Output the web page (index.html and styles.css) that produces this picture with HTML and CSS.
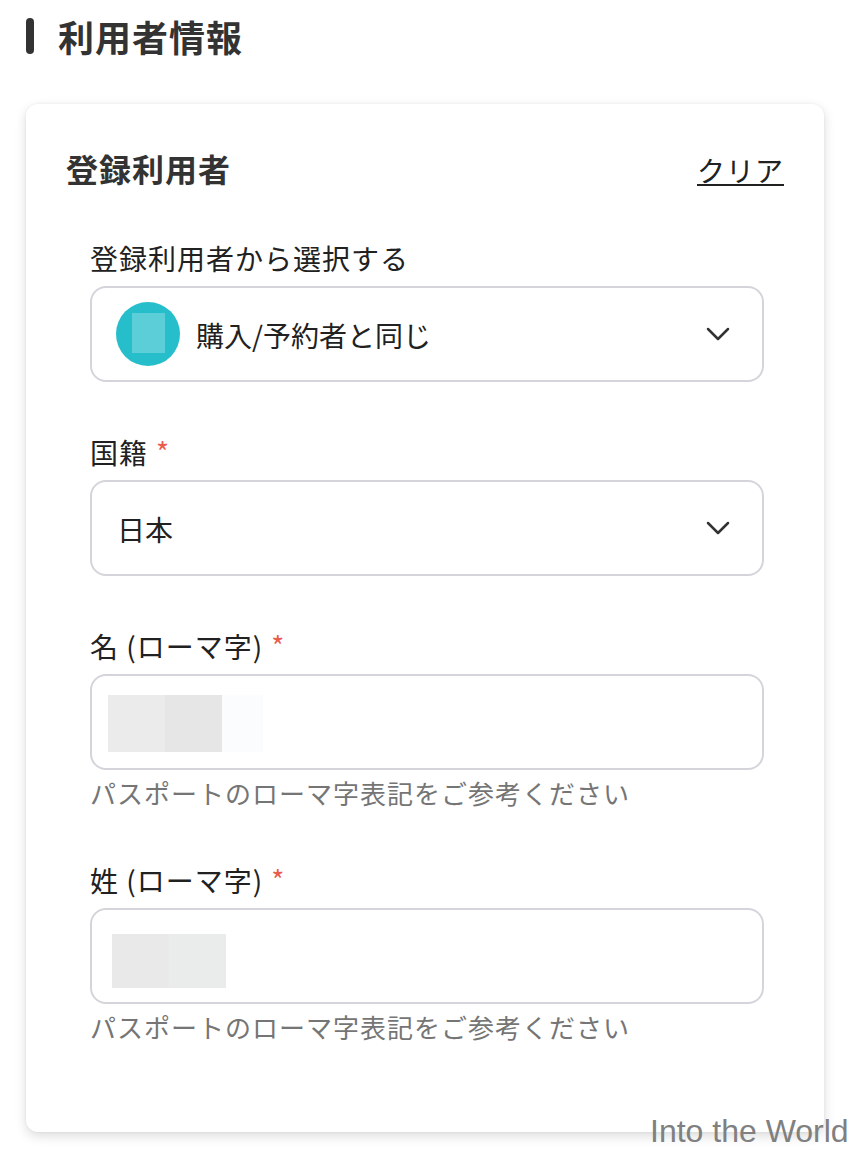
FILE: index.html
```html
<!DOCTYPE html>
<html lang="ja">
<head>
<meta charset="utf-8">
<title>利用者情報</title>
<link rel="stylesheet" href="styles.css">
</head>
<body>
<main class="page">
  <h1 class="page-title"><span class="bar"></span>利用者情報</h1>
  <section class="card">
    <header class="card-head">
      <h2 class="card-title">登録利用者</h2>
      <a class="clear">クリア</a>
    </header>
    <div class="field">
      <div class="label">登録利用者から選択する</div>
      <div class="control select">
        <span class="avatar"><span class="avatar-mask"></span></span>
        <span class="value">購入/予約者と同じ</span>
        <svg class="chevron" viewBox="0 0 24 14"><path d="M2 2 L12 12 L22 2"/></svg>
      </div>
    </div>
    <div class="field">
      <div class="label">国籍<span class="req">*</span></div>
      <div class="control select">
        <span class="value value-only">日本</span>
        <svg class="chevron" viewBox="0 0 24 14"><path d="M2 2 L12 12 L22 2"/></svg>
      </div>
    </div>
    <div class="field">
      <div class="label">名 (ローマ字)<span class="req">*</span></div>
      <div class="control"><span class="mask-first"></span></div>
      <div class="hint">パスポートのローマ字表記をご参考ください</div>
    </div>
    <div class="field">
      <div class="label">姓 (ローマ字)<span class="req">*</span></div>
      <div class="control"><span class="mask-last"></span></div>
      <div class="hint">パスポートのローマ字表記をご参考ください</div>
    </div>
  </section>
  <div class="watermark">Into the World</div>
</main>
</body>
</html>
```
FILE: styles.css
```css
* { box-sizing: border-box; }
body { margin: 0; background: #fff; color: #212121; font-family: "Noto Sans CJK JP", sans-serif; }
.page { position: relative; width: 858px; height: 1152px; padding: 12px 34px 0 26px; overflow: hidden; }
.page-title { display: flex; gap: 24px; height: 48px; margin: 0 0 44px; font-size: 36px; line-height: 48px; letter-spacing: 1px; color: #333; }
.bar { width: 8px; height: 36px; margin-top: 6px; border-radius: 4px; background: #333; }
.card { height: 1028px; padding: 40px 40px 0; border-radius: 12px; background: #fff; box-shadow: 0 4px 12px rgba(0,0,0,.14), 0 0 3px rgba(0,0,0,.06); }
.card-head { display: flex; justify-content: space-between; height: 48px; line-height: 48px; margin-bottom: 48px; }
.card-title { margin: 0; font-size: 32px; letter-spacing: 1px; color: #333; }
.clear { height: 42px; border-bottom: 2px solid #212121; font-size: 28px; letter-spacing: 1px; line-height: 52px; }
.field { height: 194px; padding: 0 20px 0 24px; }
.field + .field + .field { height: 234px; }
.label { display: flex; height: 46px; font-size: 28px; line-height: 36px; letter-spacing: 1px; }
.req { margin-left: 8px; color: #ea5b4b; font-size: 28px; line-height: 34px; }
.control { display: flex; align-items: center; height: 96px; border: 2px solid #d5d4da; border-radius: 16px; }
.select { padding: 0 32px 0 24px; gap: 16px; }
.value { padding-top: 2px; font-size: 28px; line-height: 40px; }
.value-only { padding-left: 1px; }
.chevron { width: 24px; height: 14px; margin-left: auto; fill: none; stroke: #333; stroke-width: 2.5; stroke-linecap: round; stroke-linejoin: round; }
.avatar { display: flex; align-items: center; justify-content: center; width: 64px; height: 64px; border-radius: 50%; background: #27becb; }
.avatar-mask { width: 33px; height: 40px; margin-bottom: 2px; background: #5cced7; }
.mask-first { width: 155px; height: 57px; margin: 2px 0 0 16px; background: linear-gradient(90deg, #ebebeb 57px, #e6e6e6 57px 114px, #fbfcfe 114px); }
.mask-last { width: 114px; height: 54px; margin: 10px 0 0 20px; background: linear-gradient(90deg, #e9e9e9 57px, #eaecec 57px); }
.hint { height: 48px; font-size: 26px; line-height: 46px; letter-spacing: 1px; color: #757575; }
.watermark { position: absolute; left: 650px; top: 1113px; font: 32px/36px "Liberation Sans", sans-serif; color: #808080; white-space: nowrap; }
```
